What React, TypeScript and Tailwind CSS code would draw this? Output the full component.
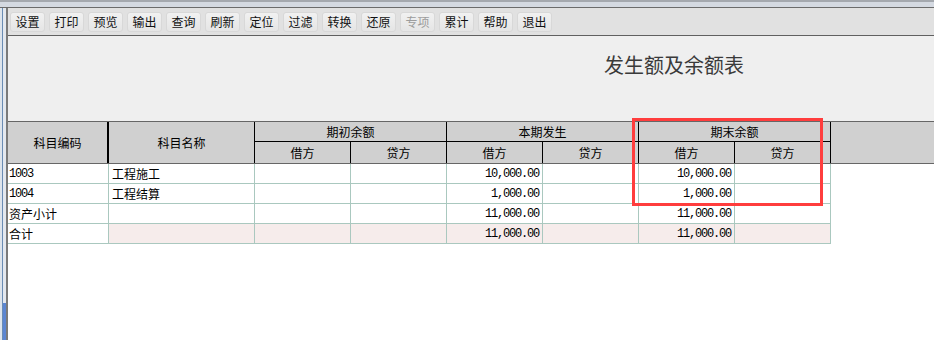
const cjk = '"Noto Sans CJK SC", "Liberation Sans", sans-serif';
const mono = '"Liberation Mono", "Noto Sans CJK SC", monospace';

const tools = ['设置', '打印', '预览', '输出', '查询', '刷新', '定位', '过滤', '转换', '还原', '专项', '累计', '帮助', '退出'];

const rows = [
  { code: '1003', name: '工程施工', bd: '10,000.00', ed: '10,000.00' },
  { code: '1004', name: '工程结算', bd: '1,000.00', ed: '1,000.00' },
  { code: '资产小计', name: '', bd: '11,000.00', ed: '11,000.00' },
  { code: '合计', name: '', bd: '11,000.00', ed: '11,000.00', total: true },
];

function GroupHead({ title }: { title: string }) {
  return (
    <div className="w-[192px] flex flex-col border-r border-black">
      <div className="h-[20px] flex items-center justify-center border-b border-black">{title}</div>
      <div className="flex-1 flex">
        <div className="w-[96px] flex items-center justify-center border-r border-black">借方</div>
        <div className="flex-1 flex items-center justify-center">贷方</div>
      </div>
    </div>
  );
}

function Num({ v, pink }: { v?: string; pink?: boolean }) {
  return (
    <div
      className={`w-[96px] border-r border-[#aac8bf] flex items-center justify-end pr-[3px] text-[12px] tracking-[-1.2px] ${pink ? 'bg-[#f6eceb]' : ''}`}
      style={{ fontFamily: mono }}
    >
      {v}
    </div>
  );
}

export default function App() {
  return (
    <div className="relative w-[934px] h-[340px] overflow-hidden bg-white text-black" style={{ fontFamily: cjk }}>
      {/* window top edge */}
      <div className="h-[8px] flex flex-col">
        <div className="h-[2px] bg-[#a4a8ae]" />
        <div className="h-[5px] bg-[#d4d9e1]" />
        <div className="h-[1px] bg-[#6b6b6b]" />
      </div>

      <div className="flex h-[332px]">
        {/* left strip */}
        <div className="w-[8px] flex">
          <div className="w-[2px] bg-[#dde4ec]" />
          <div className="w-[4px] flex flex-col border-l border-[#6a8cb4]">
            <div className="flex-1 bg-[#e4e8ee]" />
            <div className="h-[37px] bg-[#5c86d2]" />
          </div>
          <div className="w-[2px] bg-[#7a7a7a]" />
        </div>

        <div className="flex-1 flex flex-col">
          {/* toolbar */}
          <div className="h-[28px] bg-[#e1e1e1] border-b border-[#606060] flex items-start pt-[4px] pl-[2px] gap-[4px]">
            {tools.map((t) => (
              <div
                key={t}
                className={`w-[35px] h-[20px] rounded-[3px] border border-[#d8d8d8] bg-linear-to-b from-[#f1f1f1] to-[#e5e5e5] flex items-center justify-center text-[12px] leading-none ${t === '专项' ? 'text-[#9c9c9c]' : 'text-[#111]'}`}
              >
                {t}
              </div>
            ))}
          </div>

          {/* title area */}
          <div className="h-[85px] bg-[#efefef] pl-[596px] pt-[18px]">
            <div className="text-[20px] leading-[22px] text-[#3a3a3a]">发生额及余额表</div>
          </div>

          {/* table header */}
          <div className="h-[43px] flex bg-[#d0d0d0] border-y border-[#666] text-[12px]">
            <div className="w-[101px] flex items-center justify-center border-r-2 border-black">科目编码</div>
            <div className="w-[146px] flex items-center justify-center border-r border-black">科目名称</div>
            <GroupHead title="期初余额" />
            <GroupHead title="本期发生" />
            <GroupHead title="期末余额" />
          </div>

          {/* table body */}
          {rows.map((r) => (
            <div key={r.code} className="w-[823px] h-[20px] flex border-b border-[#aac8bf] text-[12px]">
              <div
                className={`w-[101px] border-r border-[#aac8bf] flex items-center pl-[1px] ${/\d/.test(r.code) ? 'text-[12px] tracking-[-1.2px]' : ''}`}
                style={/\d/.test(r.code) ? { fontFamily: mono } : undefined}
              >
                {r.code}
              </div>
              <div className={`w-[146px] border-r border-[#aac8bf] flex items-center pl-[3px] ${r.total ? 'bg-[#f6eceb]' : ''}`}>
                {r.name}
              </div>
              <Num pink={r.total} />
              <Num pink={r.total} />
              <Num v={r.bd} pink={r.total} />
              <Num pink={r.total} />
              <Num v={r.ed} pink={r.total} />
              <Num pink={r.total} />
            </div>
          ))}
        </div>
      </div>

      {/* red annotation box */}
      <div className="absolute left-[632px] top-[118px] w-[191px] h-[88px] border-[3px] border-[#ff3d3d]" />
    </div>
  );
}
